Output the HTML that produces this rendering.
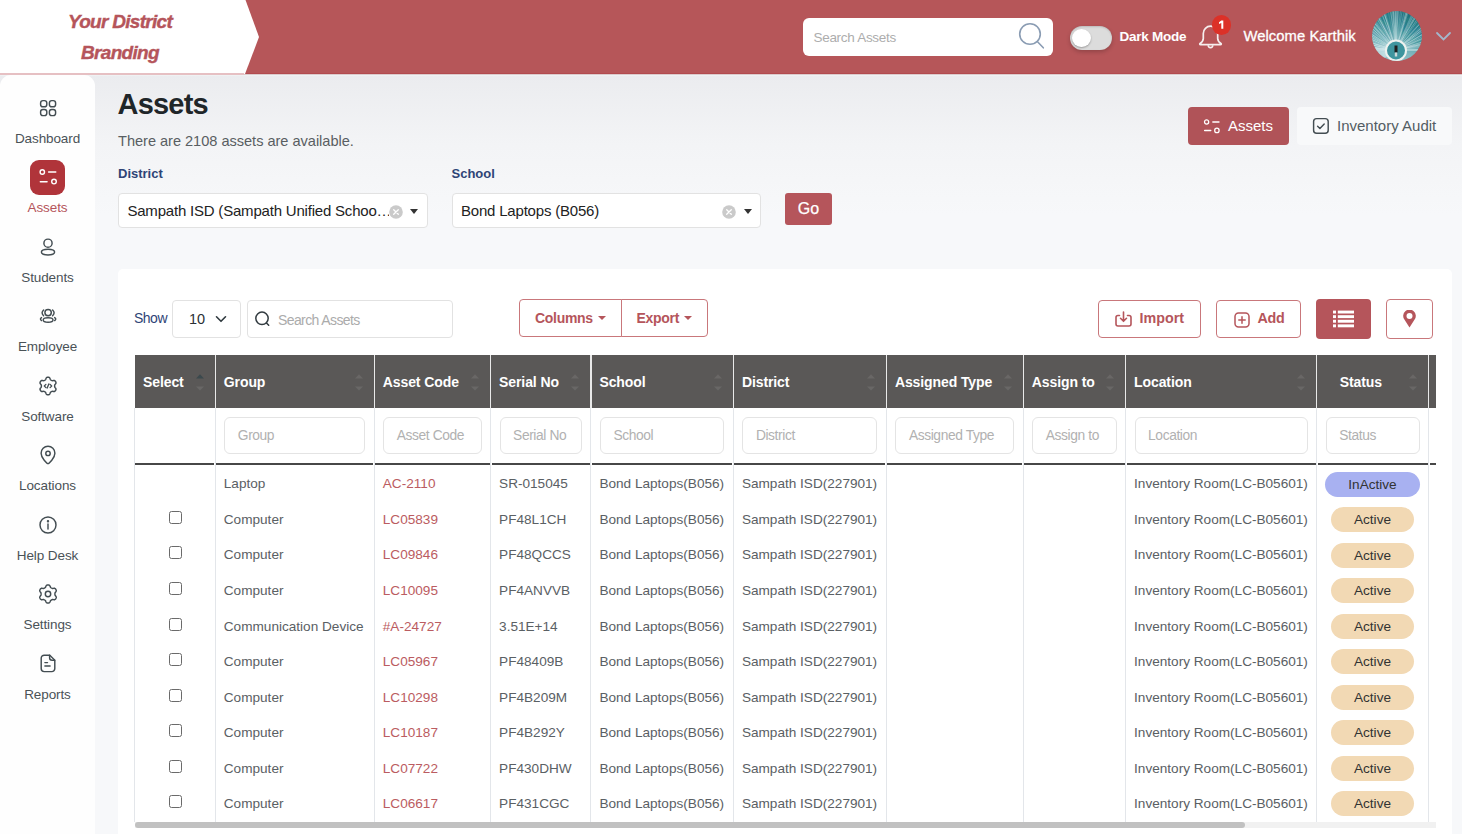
<!DOCTYPE html>
<html><head><meta charset="utf-8">
<style>
*{box-sizing:border-box;margin:0;padding:0}
html,body{width:1462px;height:834px;overflow:hidden}
body{font-family:"Liberation Sans",sans-serif;position:relative;background:linear-gradient(180deg,#ebecef 0px,#ebecef 76px,#f3f4f6 145px,#f7f8fa 215px,#f7f8fa 834px);color:#555}
.abs{position:absolute}
.hdr{left:0;top:0;width:1462px;height:74px;background:#b65659}
.logo{left:0;top:0;width:260px;height:74px;background:#fff;clip-path:polygon(0 0,245.5px 0,259px 37px,245px 74px,0 74px)}
.logoline{left:0;top:73px;width:244px;height:1.8px;background:#e6c0c3}
.logotxt{color:#b5555b;font-weight:bold;font-style:italic;font-size:19px;text-align:center;width:240px;left:0;line-height:31px;letter-spacing:-0.7px;-webkit-text-stroke:0.4px #b5555b}
.side{left:0;top:75px;width:95px;height:800px;background:#fefefe;border-radius:11px 11px 0 0}
.nav{position:absolute;left:0;width:95px;text-align:center;font-size:13.5px;color:#4a5257}
.nav svg{position:absolute;left:37.5px;top:0}
.nav span{position:absolute;left:0;width:95px;top:33px;letter-spacing:-0.1px}
.card{left:118px;top:268.5px;width:1334px;height:600px;background:#fff;border-radius:5px}
.txt{position:absolute;white-space:nowrap}
.th{position:absolute;top:355px;height:53px;background:#5a5857}
.thd{position:absolute;top:355px;height:53px;width:1.3px;background:#e9e9e9}
.vd{position:absolute;top:408px;height:414px;width:1px;background:#e3e6ea}
.finput{position:absolute;top:417px;height:37px;border:1px solid #e4e4e4;border-radius:6px;background:#fff;font-size:13.8px;color:#b1b1b1;padding-left:12.5px;line-height:35px;letter-spacing:-0.4px;white-space:nowrap;overflow:hidden}
.cell{position:absolute;font-size:13.6px;color:#5a6064;white-space:nowrap}
.code{color:#bb5c61}
.cb{position:absolute;left:168.5px;width:13.5px;height:13px;border:1.3px solid #6a6a6a;border-radius:2.5px;background:#fff}
.badge{position:absolute;height:25px;border-radius:13px;font-size:13.6px;color:#333;text-align:center;line-height:25px}
.obtn{position:absolute;border:1.3px solid #c9777b;border-radius:4px;background:#fff;color:#b5555b;font-weight:bold;font-size:14px}
</style></head><body>

<div class="abs hdr"></div><div class="abs" style="left:0;top:73px;width:1462px;height:1px;background:#b24b4f"></div><div class="abs" style="left:0;top:74px;width:1462px;height:1px;background:#dccbcd"></div><div class="abs" style="left:0;top:75px;width:1462px;height:1px;background:#eff2f3"></div>
<div class="abs logo"></div><div class="abs logoline"></div>
<div class="abs logotxt" style="top:6px">Your District</div><div class="abs logotxt" style="top:37px">Branding</div>
<div class="abs" style="left:803px;top:17.5px;width:250px;height:38px;background:#fff;border-radius:6px"></div>
<div class="txt" style="left:813.5px;top:30px;font-size:13.5px;color:#adadad;letter-spacing:-0.3px">Search Assets</div>
<svg class="abs" style="left:1016px;top:21px" width="32" height="30" viewBox="0 0 32 30"><circle cx="14" cy="13" r="10.3" stroke="#8a9cb3" stroke-width="1.6" fill="none"/><path d="M21.3 20.5l6 6.3" stroke="#8a9cb3" stroke-width="1.6" stroke-linecap="round"/></svg>
<div class="abs" style="left:1069.5px;top:25.5px;width:42px;height:24px;border-radius:12px;background:#dcdcdc;box-shadow:inset 0 1px 2px rgba(0,0,0,.15), 0 2px 4px rgba(0,0,0,.2)"></div>
<div class="abs" style="left:1072px;top:29px;width:18.5px;height:18px;border-radius:50%;background:#fff;box-shadow:0 1px 2px rgba(0,0,0,.3)"></div>
<div class="txt" style="left:1119.5px;top:28.5px;font-size:13.5px;font-weight:bold;color:#fff;letter-spacing:-0.25px">Dark Mode</div>
<svg class="abs" style="left:1197px;top:22.8px" width="28" height="30" viewBox="0 0 28 30"><path d="M6.3 10.4a7.2 7.2 0 0 1 14.4 0V15.5c0 2.5 1.5 3.8 3.2 5 .6.5.4 1.2-.4 1.2H3.5c-.8 0-1-.7-.4-1.2 1.7-1.2 3.2-2.5 3.2-5z" stroke="#f6eeee" stroke-width="1.7" fill="none" stroke-linejoin="round"/><path d="M11.2 22.3a2.3 2.3 0 0 0 4.6 0" stroke="#f6eeee" stroke-width="1.6" fill="none"/></svg>
<div class="abs" style="left:1211.5px;top:15.3px;width:19.5px;height:19.5px;border-radius:50%;background:#dc3128"><svg width="19.5" height="19.5" viewBox="0 0 19.5 19.5" style="position:absolute;left:0;top:0"><path d="M9.3 5.6h2V13.7h-2V8.1l-2.3.8V7.3z" fill="#fff"/></svg></div>
<div class="txt" style="left:1243.5px;top:27.5px;font-size:14.8px;color:#fff;letter-spacing:0.05px;-webkit-text-stroke:0.3px #fff">Welcome Karthik</div>
<div class="abs" style="left:1372.3px;top:11px;width:50px;height:50px;border-radius:50%;overflow:hidden;background:linear-gradient(200deg,#24707c 0%,#3f8f99 35%,#7fb8bf 70%,#9fcbd0 100%)"><svg width="50" height="50" viewBox="0 0 50 50" style="position:absolute;left:0;top:0"><path d="M15.0 39.1L-36.0 39.9" stroke="#e6f4f5" stroke-width="0.55" opacity="0.52"/><path d="M15.0 38.5L-35.9 35.9" stroke="#e6f4f5" stroke-width="0.39" opacity="0.56"/><path d="M15.0 38.4L-35.9 35.3" stroke="#e6f4f5" stroke-width="0.49" opacity="0.67"/><path d="M15.1 37.9L-35.6 31.8" stroke="#e6f4f5" stroke-width="0.61" opacity="0.75"/><path d="M15.2 37.2L-34.8 26.9" stroke="#e6f4f5" stroke-width="0.70" opacity="0.49"/><path d="M15.2 37.2L-34.7 26.7" stroke="#e6f4f5" stroke-width="0.83" opacity="0.57"/><path d="M15.3 36.6L-33.8 22.7" stroke="#e6f4f5" stroke-width="0.72" opacity="0.62"/><path d="M15.4 36.4L-33.5 21.7" stroke="#e6f4f5" stroke-width="0.68" opacity="0.63"/><path d="M15.6 35.9L-32.3 18.3" stroke="#e6f4f5" stroke-width="0.83" opacity="0.27"/><path d="M15.7 35.4L-31.1 15.2" stroke="#e6f4f5" stroke-width="0.83" opacity="0.61"/><path d="M16.0 34.9L-29.5 11.9" stroke="#e6f4f5" stroke-width="0.57" opacity="0.71"/><path d="M16.2 34.5L-28.1 9.2" stroke="#e6f4f5" stroke-width="0.86" opacity="0.47"/><path d="M16.4 34.2L-26.5 6.7" stroke="#e6f4f5" stroke-width="0.42" opacity="0.30"/><path d="M16.4 34.1L-26.4 6.4" stroke="#e6f4f5" stroke-width="0.59" opacity="0.73"/><path d="M16.8 33.6L-23.9 2.9" stroke="#e6f4f5" stroke-width="0.63" opacity="0.40"/><path d="M17.0 33.4L-22.8 1.5" stroke="#e6f4f5" stroke-width="0.67" opacity="0.43"/><path d="M17.3 33.0L-20.6 -1.2" stroke="#e6f4f5" stroke-width="0.73" opacity="0.70"/><path d="M17.7 32.5L-17.8 -4.0" stroke="#e6f4f5" stroke-width="0.90" opacity="0.68"/><path d="M17.9 32.4L-16.5 -5.3" stroke="#e6f4f5" stroke-width="0.82" opacity="0.33"/><path d="M18.4 32.0L-13.6 -7.7" stroke="#e6f4f5" stroke-width="0.66" opacity="0.70"/><path d="M18.6 31.8L-12.2 -8.9" stroke="#e6f4f5" stroke-width="0.81" opacity="0.36"/><path d="M18.8 31.6L-10.4 -10.2" stroke="#e6f4f5" stroke-width="0.38" opacity="0.39"/><path d="M19.3 31.3L-7.3 -12.2" stroke="#e6f4f5" stroke-width="0.40" opacity="0.74"/><path d="M19.6 31.1L-5.1 -13.5" stroke="#e6f4f5" stroke-width="0.43" opacity="0.46"/><path d="M19.8 31.1L-4.3 -13.9" stroke="#e6f4f5" stroke-width="0.83" opacity="0.63"/><path d="M20.0 30.9L-2.6 -14.8" stroke="#e6f4f5" stroke-width="0.37" opacity="0.56"/><path d="M20.7 30.6L2.1 -16.9" stroke="#e6f4f5" stroke-width="0.83" opacity="0.42"/><path d="M21.2 30.4L5.5 -18.1" stroke="#e6f4f5" stroke-width="0.90" opacity="0.50"/><path d="M21.3 30.4L5.8 -18.2" stroke="#e6f4f5" stroke-width="0.68" opacity="0.29"/><path d="M21.5 30.3L7.5 -18.7" stroke="#e6f4f5" stroke-width="0.57" opacity="0.35"/><path d="M22.2 30.2L12.2 -19.8" stroke="#e6f4f5" stroke-width="0.37" opacity="0.33"/><path d="M22.8 30.1L15.8 -20.4" stroke="#e6f4f5" stroke-width="0.88" opacity="0.41"/><path d="M23.2 30.0L18.6 -20.8" stroke="#e6f4f5" stroke-width="0.60" opacity="0.44"/><path d="M23.4 30.0L20.0 -20.9" stroke="#e6f4f5" stroke-width="0.68" opacity="0.57"/><path d="M23.8 30.0L22.8 -21.0" stroke="#e6f4f5" stroke-width="0.87" opacity="0.56"/><path d="M24.2 30.0L25.4 -21.0" stroke="#e6f4f5" stroke-width="0.75" opacity="0.47"/><path d="M24.5 30.0L27.2 -20.9" stroke="#e6f4f5" stroke-width="0.89" opacity="0.40"/><path d="M25.0 30.1L30.9 -20.6" stroke="#e6f4f5" stroke-width="0.36" opacity="0.52"/><path d="M25.4 30.1L33.2 -20.3" stroke="#e6f4f5" stroke-width="0.36" opacity="0.54"/><path d="M25.9 30.2L36.6 -19.7" stroke="#e6f4f5" stroke-width="0.38" opacity="0.57"/><path d="M26.3 30.3L39.3 -19.0" stroke="#e6f4f5" stroke-width="0.72" opacity="0.48"/><path d="M26.5 30.4L41.0 -18.5" stroke="#e6f4f5" stroke-width="0.76" opacity="0.60"/><path d="M26.8 30.4L42.5 -18.1" stroke="#e6f4f5" stroke-width="0.72" opacity="0.28"/><path d="M27.6 30.8L48.2 -15.9" stroke="#e6f4f5" stroke-width="0.60" opacity="0.38"/><path d="M27.8 30.8L49.5 -15.3" stroke="#e6f4f5" stroke-width="0.55" opacity="0.41"/><path d="M28.1 31.0L51.0 -14.6" stroke="#e6f4f5" stroke-width="0.68" opacity="0.43"/><path d="M28.4 31.2L53.4 -13.3" stroke="#e6f4f5" stroke-width="0.77" opacity="0.44"/><path d="M28.6 31.3L54.9 -12.4" stroke="#e6f4f5" stroke-width="0.75" opacity="0.53"/><path d="M29.1 31.6L58.0 -10.4" stroke="#e6f4f5" stroke-width="0.79" opacity="0.36"/><path d="M29.4 31.8L60.0 -9.0" stroke="#e6f4f5" stroke-width="0.59" opacity="0.34"/><path d="M29.9 32.2L63.5 -6.2" stroke="#e6f4f5" stroke-width="0.53" opacity="0.30"/><path d="M30.1 32.4L64.5 -5.3" stroke="#e6f4f5" stroke-width="0.59" opacity="0.67"/><path d="M30.6 32.8L67.8 -2.0" stroke="#e6f4f5" stroke-width="0.54" opacity="0.33"/><path d="M30.8 33.1L69.1 -0.5" stroke="#e6f4f5" stroke-width="0.60" opacity="0.69"/><path d="M30.9 33.2L69.9 0.4" stroke="#e6f4f5" stroke-width="0.64" opacity="0.31"/><path d="M31.1 33.5L71.5 2.4" stroke="#e6f4f5" stroke-width="0.81" opacity="0.65"/><path d="M31.4 33.8L73.1 4.6" stroke="#e6f4f5" stroke-width="0.79" opacity="0.39"/><path d="M31.7 34.4L75.5 8.3" stroke="#e6f4f5" stroke-width="0.54" opacity="0.65"/><path d="M31.8 34.5L76.0 9.0" stroke="#e6f4f5" stroke-width="0.79" opacity="0.40"/><path d="M32.0 34.9L77.5 11.9" stroke="#e6f4f5" stroke-width="0.58" opacity="0.42"/><path d="M32.2 35.4L78.9 14.8" stroke="#e6f4f5" stroke-width="0.86" opacity="0.45"/><path d="M32.3 35.6L79.6 16.5" stroke="#e6f4f5" stroke-width="0.87" opacity="0.25"/><path d="M32.6 36.4L81.4 21.5" stroke="#e6f4f5" stroke-width="0.59" opacity="0.74"/><path d="M32.7 36.8L82.2 24.4" stroke="#e6f4f5" stroke-width="0.47" opacity="0.71"/><path d="M32.8 37.1L82.6 26.3" stroke="#e6f4f5" stroke-width="0.71" opacity="0.67"/><path d="M32.9 37.4L83.0 28.2" stroke="#e6f4f5" stroke-width="0.54" opacity="0.39"/><path d="M32.9 37.6L83.3 29.9" stroke="#e6f4f5" stroke-width="0.67" opacity="0.28"/><path d="M33.0 38.1L83.7 32.8" stroke="#e6f4f5" stroke-width="0.37" opacity="0.66"/><path d="M33.0 38.8L84.0 37.7" stroke="#e6f4f5" stroke-width="0.86" opacity="0.60"/><path d="M33.0 39.2L84.0 40.4" stroke="#e6f4f5" stroke-width="0.67" opacity="0.70"/><path d="M24 39L-35.6 32.4" stroke="#e6f4f5" stroke-width="0.6" opacity="0.5"/><path d="M24 39L-35.8 34.1" stroke="#e6f4f5" stroke-width="0.6" opacity="0.5"/><path d="M24 39L-35.9 35.9" stroke="#e6f4f5" stroke-width="0.6" opacity="0.5"/><path d="M24 39L-36.0 37.7" stroke="#e6f4f5" stroke-width="0.6" opacity="0.5"/><path d="M24 39L-36.0 39.4" stroke="#e6f4f5" stroke-width="0.6" opacity="0.5"/><path d="M24 39L-36.0 41.2" stroke="#e6f4f5" stroke-width="0.6" opacity="0.5"/><path d="M24 39L-35.9 43.0" stroke="#e6f4f5" stroke-width="0.6" opacity="0.5"/><path d="M24 39L-35.7 44.7" stroke="#e6f4f5" stroke-width="0.6" opacity="0.5"/><path d="M24 39L-35.5 46.5" stroke="#e6f4f5" stroke-width="0.6" opacity="0.5"/><path d="M24 39L-35.3 48.2" stroke="#e6f4f5" stroke-width="0.6" opacity="0.5"/><path d="M24 39L-35.0 50.0" stroke="#e6f4f5" stroke-width="0.6" opacity="0.5"/><path d="M24 39L-34.6 51.7" stroke="#e6f4f5" stroke-width="0.6" opacity="0.5"/><path d="M24 39L-34.2 53.4" stroke="#e6f4f5" stroke-width="0.6" opacity="0.5"/><path d="M24 39L-33.8 55.1" stroke="#e6f4f5" stroke-width="0.6" opacity="0.5"/><path d="M24 39L-33.3 56.8" stroke="#e6f4f5" stroke-width="0.6" opacity="0.5"/><path d="M24 39L-32.7 58.5" stroke="#e6f4f5" stroke-width="0.6" opacity="0.5"/><path d="M24 39L-32.1 60.2" stroke="#e6f4f5" stroke-width="0.6" opacity="0.5"/><path d="M24 39L-31.5 61.8" stroke="#e6f4f5" stroke-width="0.6" opacity="0.5"/><path d="M24 39L-30.8 63.4" stroke="#e6f4f5" stroke-width="0.6" opacity="0.5"/><path d="M24 39L-30.1 65.0" stroke="#e6f4f5" stroke-width="0.6" opacity="0.5"/><path d="M24 39L-29.3 66.6" stroke="#e6f4f5" stroke-width="0.6" opacity="0.5"/><path d="M24 39L-28.4 68.2" stroke="#e6f4f5" stroke-width="0.6" opacity="0.5"/><path d="M24 39L-27.5 69.7" stroke="#e6f4f5" stroke-width="0.6" opacity="0.5"/><path d="M24 39L-26.6 71.2" stroke="#e6f4f5" stroke-width="0.6" opacity="0.5"/><path d="M24 39L-25.7 72.7" stroke="#e6f4f5" stroke-width="0.6" opacity="0.5"/><circle cx="24" cy="39.5" r="10" stroke="#eef2ef" stroke-width="2" fill="#3e959e"/><path d="M22.5 34.5h3v7h-3z" fill="#1e1e1e"/><path d="M22.8 41.5h2.4v4h-2.4z" fill="#cfd8d8"/></svg></div>
<svg class="abs" style="left:1435px;top:30px" width="17" height="12" viewBox="0 0 17 12"><path d="M2 3l6.5 6.5L15 3" stroke="#a3b7cc" stroke-width="1.8" fill="none" stroke-linecap="round"/></svg>
<div class="abs side"></div>
<div class="nav" style="top:98px"><svg width="20" height="20" viewBox="0 0 20 20"><g stroke="#434d52" stroke-width="1.45" fill="none" stroke-linecap="round" stroke-linejoin="round"><rect x="2.6" y="2.6" width="6.2" height="6.2" rx="2.4"/><rect x="11.4" y="2.6" width="6.2" height="6.2" rx="2.4"/><rect x="2.6" y="11.4" width="6.2" height="6.2" rx="2.4"/><rect x="11.4" y="11.4" width="6.2" height="6.2" rx="2.4"/></g></svg><span>Dashboard</span></div>
<div class="nav" style="top:237px"><svg width="20" height="20" viewBox="0 0 20 20"><g stroke="#434d52" stroke-width="1.45" fill="none" stroke-linecap="round" stroke-linejoin="round"><circle cx="10" cy="6.2" r="4.1"/><ellipse cx="10" cy="15.1" rx="6.6" ry="2.8"/></g></svg><span>Students</span></div>
<div class="nav" style="top:306px"><svg width="20" height="20" viewBox="0 0 20 20"><g stroke="#434d52" stroke-width="1.45" fill="none" stroke-linecap="round" stroke-linejoin="round"><circle cx="10.1" cy="6.6" r="3.2"/><ellipse cx="10.1" cy="14" rx="4.9" ry="2.2"/><path d="M5.6 4Q2.6 6.85 5.6 9.7M14.6 4Q17.6 6.85 14.6 9.7M3.5 11.6Q1.4 13.1 3.5 14.6M16.7 11.6Q18.8 13.1 16.7 14.6"/></g></svg><span>Employee</span></div>
<div class="nav" style="top:376px"><svg width="20" height="20" viewBox="0 0 20 20" style="left:37.5px;top:0"><g stroke="#434d52" stroke-width="1.45" fill="none" stroke-linecap="round" stroke-linejoin="round"><path d="M16.62 10.00 L16.63 10.43 L16.68 10.88 L16.91 11.37 L17.44 11.99 L17.91 12.69 L18.00 13.31 L17.85 13.87 L17.60 14.39 L17.28 14.86 L16.87 15.27 L16.28 15.51 L15.44 15.44 L14.64 15.29 L14.10 15.35 L13.69 15.53 L13.31 15.74 L12.94 15.96 L12.58 16.23 L12.26 16.67 L11.99 17.44 L11.63 18.20 L11.13 18.59 L10.57 18.74 L10.00 18.78 L9.43 18.74 L8.87 18.59 L8.37 18.20 L8.01 17.44 L7.74 16.67 L7.42 16.23 L7.06 15.96 L6.69 15.74 L6.31 15.53 L5.90 15.35 L5.36 15.29 L4.56 15.44 L3.72 15.51 L3.13 15.27 L2.72 14.86 L2.40 14.39 L2.15 13.87 L2.00 13.31 L2.09 12.69 L2.56 11.99 L3.09 11.37 L3.32 10.88 L3.37 10.43 L3.38 10.00 L3.37 9.57 L3.32 9.12 L3.09 8.63 L2.56 8.01 L2.09 7.31 L2.00 6.69 L2.15 6.13 L2.40 5.61 L2.72 5.14 L3.13 4.73 L3.72 4.49 L4.56 4.56 L5.36 4.71 L5.90 4.65 L6.31 4.47 L6.69 4.26 L7.06 4.04 L7.42 3.77 L7.74 3.33 L8.01 2.56 L8.37 1.80 L8.87 1.41 L9.43 1.26 L10.00 1.22 L10.57 1.26 L11.13 1.41 L11.63 1.80 L11.99 2.56 L12.26 3.33 L12.58 3.77 L12.94 4.04 L13.31 4.26 L13.69 4.47 L14.10 4.65 L14.64 4.71 L15.44 4.56 L16.28 4.49 L16.87 4.73 L17.28 5.14 L17.60 5.61 L17.85 6.13 L18.00 6.69 L17.91 7.31 L17.44 8.01 L16.91 8.63 L16.68 9.12 L16.63 9.57Z"/><path d="M7.9 8.4l-1.6 1.6 1.6 1.6M12.1 8.4l1.6 1.6-1.6 1.6M10.8 7.9l-1.6 4.2" stroke-width="1.3"/></g></svg><span>Software</span></div>
<div class="nav" style="top:445px"><svg width="20" height="20" viewBox="0 0 20 20"><g stroke="#434d52" stroke-width="1.45" fill="none" stroke-linecap="round" stroke-linejoin="round"><path d="M10 18.6c-.9 0-6.9-5.6-6.9-10.4a6.9 6.9 0 0 1 13.8 0c0 4.8-6 10.4-6.9 10.4z"/><circle cx="10" cy="8.4" r="2.2"/></g></svg><span>Locations</span></div>
<div class="nav" style="top:515px"><svg width="20" height="20" viewBox="0 0 20 20"><g stroke="#434d52" stroke-width="1.45" fill="none" stroke-linecap="round" stroke-linejoin="round"><circle cx="10" cy="10" r="8"/><path d="M10 9v5"/><circle cx="10" cy="6.3" r=".5" fill="#3f4a50"/></g></svg><span>Help Desk</span></div>
<div class="nav" style="top:584px"><svg width="20" height="20" viewBox="0 0 20 20"><g stroke="#434d52" stroke-width="1.45" fill="none" stroke-linecap="round" stroke-linejoin="round"><path d="M16.92 10.00 L16.93 10.45 L16.98 10.92 L17.20 11.43 L17.73 12.07 L18.20 12.78 L18.28 13.43 L18.12 14.00 L17.86 14.54 L17.53 15.03 L17.11 15.45 L16.51 15.71 L15.66 15.66 L14.84 15.52 L14.29 15.59 L13.86 15.77 L13.46 16.00 L13.07 16.23 L12.69 16.50 L12.36 16.95 L12.07 17.73 L11.69 18.49 L11.17 18.88 L10.59 19.04 L10.00 19.08 L9.41 19.04 L8.83 18.88 L8.31 18.49 L7.93 17.73 L7.64 16.95 L7.31 16.50 L6.93 16.23 L6.54 16.00 L6.14 15.77 L5.71 15.59 L5.16 15.52 L4.34 15.66 L3.49 15.71 L2.89 15.45 L2.47 15.03 L2.14 14.54 L1.88 14.00 L1.72 13.43 L1.80 12.78 L2.27 12.07 L2.80 11.43 L3.02 10.92 L3.07 10.45 L3.08 10.00 L3.07 9.55 L3.02 9.08 L2.80 8.57 L2.27 7.93 L1.80 7.22 L1.72 6.57 L1.88 6.00 L2.14 5.46 L2.47 4.97 L2.89 4.55 L3.49 4.29 L4.34 4.34 L5.16 4.48 L5.71 4.41 L6.14 4.23 L6.54 4.00 L6.93 3.77 L7.31 3.50 L7.64 3.05 L7.93 2.27 L8.31 1.51 L8.83 1.12 L9.41 0.96 L10.00 0.92 L10.59 0.96 L11.17 1.12 L11.69 1.51 L12.07 2.27 L12.36 3.05 L12.69 3.50 L13.07 3.77 L13.46 4.00 L13.86 4.23 L14.29 4.41 L14.84 4.48 L15.66 4.34 L16.51 4.29 L17.11 4.55 L17.53 4.97 L17.86 5.46 L18.12 6.00 L18.28 6.57 L18.20 7.22 L17.73 7.93 L17.20 8.57 L16.98 9.08 L16.93 9.55Z"/><circle cx="10" cy="10" r="2.7"/></g></svg><span>Settings</span></div>
<div class="nav" style="top:654px"><svg width="20" height="20" viewBox="0 0 20 20"><g stroke="#434d52" stroke-width="1.45" fill="none" stroke-linecap="round" stroke-linejoin="round"><path d="M3.2 4.2a3 3 0 0 1 3-3h5.6l5 5v8.4a3 3 0 0 1-3 3h-7.6a3 3 0 0 1-3-3z"/><path d="M11.6 1.3v2.4a2.5 2.5 0 0 0 2.5 2.5h2.6M6.9 8.6h2.6M6.9 12h5.2"/></g></svg><span>Reports</span></div>
<div class="abs" style="left:30.2px;top:159.5px;width:35px;height:35px;border-radius:9px;background:#b0343a"></div>
<svg class="abs" style="left:37.7px;top:167px" width="20" height="20" viewBox="0 0 20 20"><g stroke="#fff" stroke-width="1.4" fill="none" stroke-linecap="round"><circle cx="4.3" cy="5" r="2.2"/><path d="M10.6 5h7.2M2.3 14.8h6.8"/><circle cx="16" cy="14.6" r="2.3"/></g></svg>
<div class="nav" style="top:199.5px;color:#b5555b"><span style="top:0">Assets</span></div>
<div class="txt" style="left:117.5px;top:88px;font-size:29px;font-weight:bold;color:#1f2629;letter-spacing:-0.8px">Assets</div>
<div class="txt" style="left:118px;top:132.5px;font-size:14.6px;color:#595e62;letter-spacing:-0.03px">There are 2108 assets are available.</div>
<div class="abs" style="left:1187.7px;top:107px;width:101.3px;height:38px;border-radius:4px;background:#b05358"></div>
<svg class="abs" style="left:1202px;top:117px" width="20" height="18" viewBox="0 0 20 18"><g stroke="#fff" stroke-width="1.3" fill="none" stroke-linecap="round"><circle cx="4.6" cy="5" r="2.1"/><path d="M10.8 5h6.2M2.6 13.5h6.2"/><circle cx="14.9" cy="13.4" r="2.2"/></g></svg>
<div class="txt" style="left:1228px;top:117px;font-size:15px;color:#fff">Assets</div>
<div class="abs" style="left:1296.7px;top:107px;width:155.3px;height:38px;border-radius:4px;background:#f8f9fa"></div>
<svg class="abs" style="left:1311px;top:115.8px" width="20" height="20" viewBox="0 0 20 20"><rect x="2.6" y="2.6" width="14.6" height="14.6" rx="3" stroke="#434d52" stroke-width="1.45" fill="none"/><path d="M6.6 10.2l2.3 2.2 4.3-4.4" stroke="#434d52" stroke-width="1.45" fill="none" stroke-linecap="round" stroke-linejoin="round"/></svg>
<div class="txt" style="left:1337px;top:117px;font-size:15px;color:#535d63">Inventory Audit</div>
<div class="txt" style="left:118px;top:166px;font-size:13px;font-weight:bold;color:#2e4476">District</div>
<div class="txt" style="left:451.5px;top:166px;font-size:13px;font-weight:bold;color:#2e4476">School</div>
<div class="abs" style="left:118.4px;top:193.3px;width:309.5px;height:35px;border:1px solid #e2e2e2;border-radius:4px;background:#fff"></div>
<div class="abs" style="left:451.8px;top:193.3px;width:309.5px;height:35px;border:1px solid #e2e2e2;border-radius:4px;background:#fff"></div>
<div class="txt" style="left:127.4px;top:202px;font-size:15px;color:#222;letter-spacing:-0.2px;width:262px;overflow:hidden">Sampath ISD (Sampath Unified Schoo…</div>
<div class="txt" style="left:461px;top:202px;font-size:15px;color:#222;letter-spacing:-0.2px;width:250px;overflow:hidden">Bond Laptops (B056)</div>
<svg class="abs" style="left:388.5px;top:204.5px" width="14" height="14" viewBox="0 0 14 14"><circle cx="7" cy="7" r="6.8" fill="#cacaca"/><path d="M4.7 4.7l4.6 4.6M9.3 4.7l-4.6 4.6" stroke="#fff" stroke-width="1.3" stroke-linecap="round"/></svg>
<svg class="abs" style="left:721.5px;top:204.5px" width="14" height="14" viewBox="0 0 14 14"><circle cx="7" cy="7" r="6.8" fill="#cacaca"/><path d="M4.7 4.7l4.6 4.6M9.3 4.7l-4.6 4.6" stroke="#fff" stroke-width="1.3" stroke-linecap="round"/></svg>
<svg class="abs" style="left:410.4px;top:209px" width="8" height="5" viewBox="0 0 8 5"><path d="M0 0h8L4 5z" fill="#333"/></svg>
<svg class="abs" style="left:744px;top:209px" width="8" height="5" viewBox="0 0 8 5"><path d="M0 0h8L4 5z" fill="#333"/></svg>
<div class="abs" style="left:785px;top:193px;width:47px;height:32px;border-radius:3px;background:#b5555b;color:#fff;font-size:16px;text-align:center;line-height:32px;-webkit-text-stroke:0.25px #fff">Go</div>
<div class="abs card"></div>
<div class="txt" style="left:134px;top:310px;font-size:14px;color:#2e4476;letter-spacing:-0.5px">Show</div>
<div class="abs" style="left:172px;top:300px;width:69.3px;height:38px;border:1px solid #e2e2e2;border-radius:4px"></div>
<div class="txt" style="left:189px;top:310.5px;font-size:14.5px;color:#2a3035">10</div>
<svg class="abs" style="left:214px;top:314px" width="14" height="10" viewBox="0 0 14 10"><path d="M2.5 2.8l4.5 4.5 4.5-4.5" stroke="#2f393e" stroke-width="1.6" fill="none" stroke-linecap="round" stroke-linejoin="round"/></svg>
<div class="abs" style="left:247.3px;top:300px;width:206px;height:38px;border:1px solid #e2e2e2;border-radius:4px"></div>
<svg class="abs" style="left:253px;top:309px" width="20" height="20" viewBox="0 0 20 20"><circle cx="9" cy="9.3" r="6.2" stroke="#323b40" stroke-width="1.5" fill="none"/><path d="M13.5 14l2.2 2.2" stroke="#323b40" stroke-width="1.5" stroke-linecap="round"/></svg>
<div class="txt" style="left:278px;top:311.5px;font-size:14px;color:#ababab;letter-spacing:-0.6px">Search Assets</div>
<div class="obtn" style="left:518.6px;top:299.3px;width:103px;height:37.5px;border-radius:4px 0 0 4px"></div>
<div class="obtn" style="left:620.6px;top:299.3px;width:87px;height:37.5px;border-radius:0 4px 4px 0"></div>
<div class="txt" style="left:535px;top:309.5px;font-size:14px;font-weight:bold;color:#b5555b;letter-spacing:-0.3px">Columns</div>
<svg class="abs" style="left:597.5px;top:315.5px" width="8" height="4" viewBox="0 0 8 4"><path d="M0 0h8L4 4z" fill="#b5555b"/></svg>
<div class="txt" style="left:636.5px;top:309.5px;font-size:14px;font-weight:bold;color:#b5555b;letter-spacing:-0.3px">Export</div>
<svg class="abs" style="left:683.5px;top:315.5px" width="8" height="4" viewBox="0 0 8 4"><path d="M0 0h8L4 4z" fill="#b5555b"/></svg>
<div class="obtn" style="left:1098px;top:299.8px;width:103.3px;height:38.2px"></div>
<svg class="abs" style="left:1114px;top:310px" width="19" height="18" viewBox="0 0 19 18"><g stroke="#b5555b" stroke-width="1.6" fill="none" stroke-linecap="round" stroke-linejoin="round"><path d="M5.5 5.5H4a2 2 0 0 0-2 2v6.5a2 2 0 0 0 2 2h11a2 2 0 0 0 2-2V7.5a2 2 0 0 0-2-2h-1.5"/><path d="M9.5 2v9M6.5 8.3l3 3 3-3"/></g></svg>
<div class="txt" style="left:1139.5px;top:310px;font-size:14.3px;font-weight:bold;color:#b5555b">Import</div>
<div class="obtn" style="left:1216.3px;top:299.8px;width:84.3px;height:38.2px"></div>
<svg class="abs" style="left:1232.5px;top:310.5px" width="18" height="18" viewBox="0 0 18 18"><g stroke="#b5555b" stroke-width="1.5" fill="none" stroke-linecap="round"><rect x="2" y="2" width="14" height="14" rx="3.5"/><path d="M9 5.8v6.4M5.8 9h6.4"/></g></svg>
<div class="txt" style="left:1257.5px;top:310px;font-size:14.3px;font-weight:bold;color:#b5555b;letter-spacing:-0.3px">Add</div>
<div class="abs" style="left:1316px;top:299.4px;width:54.8px;height:39.2px;border-radius:4px;background:#b5555b"></div>
<svg class="abs" style="left:1332px;top:309.5px" width="23" height="18" viewBox="0 0 23 18"><g fill="#fff"><rect x="1" y="0.6" width="3" height="2.9"/><rect x="5.8" y="0.6" width="16.2" height="2.9"/><rect x="1" y="5.2" width="3" height="2.9"/><rect x="5.8" y="5.2" width="16.2" height="2.9"/><rect x="1" y="9.8" width="3" height="2.9"/><rect x="5.8" y="9.8" width="16.2" height="2.9"/><rect x="1" y="14.4" width="3" height="2.9"/><rect x="5.8" y="14.4" width="16.2" height="2.9"/></g></svg>
<div class="obtn" style="left:1386.2px;top:299.4px;width:46.6px;height:39.2px"></div>
<svg class="abs" style="left:1402px;top:310px" width="15" height="18" viewBox="0 0 15 18"><path d="M7.5 17.4L2.4 9.6A6.3 6.3 0 1 1 12.6 9.6z" fill="#b5555b"/><circle cx="7.5" cy="5.9" r="3" fill="#fff"/></svg>
<div class="th" style="left:134.5px;width:1301.5px"></div>
<div class="thd" style="left:214.70000000000002px"></div>
<div class="thd" style="left:373.7px"></div>
<div class="thd" style="left:490.0px"></div>
<div class="thd" style="left:590.3px"></div>
<div class="thd" style="left:732.8px"></div>
<div class="thd" style="left:885.8px"></div>
<div class="thd" style="left:1022.6999999999999px"></div>
<div class="thd" style="left:1125.0px"></div>
<div class="thd" style="left:1316.1000000000001px"></div>
<div class="thd" style="left:1428.0px"></div>
<div class="txt" style="left:143.0px;top:373.7px;font-size:14px;font-weight:bold;color:#fff;letter-spacing:-0.1px">Select</div>
<svg class="abs" style="left:195.8px;top:372.5px" width="8" height="18" viewBox="0 0 8 18"><path d="M0 5.4h8L4 1.2z" fill="#3b494d"/><path d="M0 13.5h8L4 17.6z" fill="#696766"/></svg>
<div class="txt" style="left:223.8px;top:373.7px;font-size:14px;font-weight:bold;color:#fff;letter-spacing:-0.1px">Group</div>
<svg class="abs" style="left:354.8px;top:372.5px" width="8" height="18" viewBox="0 0 8 18"><path d="M0 5.4h8L4 1.2z" fill="#696766"/><path d="M0 13.5h8L4 17.6z" fill="#696766"/></svg>
<div class="txt" style="left:382.8px;top:373.7px;font-size:14px;font-weight:bold;color:#fff;letter-spacing:-0.1px">Asset Code</div>
<svg class="abs" style="left:471.1px;top:372.5px" width="8" height="18" viewBox="0 0 8 18"><path d="M0 5.4h8L4 1.2z" fill="#696766"/><path d="M0 13.5h8L4 17.6z" fill="#696766"/></svg>
<div class="txt" style="left:499.1px;top:373.7px;font-size:14px;font-weight:bold;color:#fff;letter-spacing:-0.1px">Serial No</div>
<svg class="abs" style="left:571.4px;top:372.5px" width="8" height="18" viewBox="0 0 8 18"><path d="M0 5.4h8L4 1.2z" fill="#696766"/><path d="M0 13.5h8L4 17.6z" fill="#696766"/></svg>
<div class="txt" style="left:599.4px;top:373.7px;font-size:14px;font-weight:bold;color:#fff;letter-spacing:-0.1px">School</div>
<svg class="abs" style="left:713.9px;top:372.5px" width="8" height="18" viewBox="0 0 8 18"><path d="M0 5.4h8L4 1.2z" fill="#696766"/><path d="M0 13.5h8L4 17.6z" fill="#696766"/></svg>
<div class="txt" style="left:741.9px;top:373.7px;font-size:14px;font-weight:bold;color:#fff;letter-spacing:-0.1px">District</div>
<svg class="abs" style="left:866.9px;top:372.5px" width="8" height="18" viewBox="0 0 8 18"><path d="M0 5.4h8L4 1.2z" fill="#696766"/><path d="M0 13.5h8L4 17.6z" fill="#696766"/></svg>
<div class="txt" style="left:894.9px;top:373.7px;font-size:14px;font-weight:bold;color:#fff;letter-spacing:-0.1px">Assigned Type</div>
<svg class="abs" style="left:1003.8px;top:372.5px" width="8" height="18" viewBox="0 0 8 18"><path d="M0 5.4h8L4 1.2z" fill="#696766"/><path d="M0 13.5h8L4 17.6z" fill="#696766"/></svg>
<div class="txt" style="left:1031.8px;top:373.7px;font-size:14px;font-weight:bold;color:#fff;letter-spacing:-0.1px">Assign to</div>
<svg class="abs" style="left:1106.1px;top:372.5px" width="8" height="18" viewBox="0 0 8 18"><path d="M0 5.4h8L4 1.2z" fill="#696766"/><path d="M0 13.5h8L4 17.6z" fill="#696766"/></svg>
<div class="txt" style="left:1134.1px;top:373.7px;font-size:14px;font-weight:bold;color:#fff;letter-spacing:-0.1px">Location</div>
<svg class="abs" style="left:1297.2px;top:372.5px" width="8" height="18" viewBox="0 0 8 18"><path d="M0 5.4h8L4 1.2z" fill="#696766"/><path d="M0 13.5h8L4 17.6z" fill="#696766"/></svg>
<div class="txt" style="left:1339.7px;top:373.7px;font-size:14px;font-weight:bold;color:#fff;letter-spacing:-0.1px">Status</div>
<svg class="abs" style="left:1409.1px;top:372.5px" width="8" height="18" viewBox="0 0 8 18"><path d="M0 5.4h8L4 1.2z" fill="#696766"/><path d="M0 13.5h8L4 17.6z" fill="#696766"/></svg>
<div class="vd" style="left:134px;top:408px;height:414px"></div>
<div class="vd" style="left:214.8px"></div>
<div class="vd" style="left:373.8px"></div>
<div class="vd" style="left:490.1px"></div>
<div class="vd" style="left:590.4px"></div>
<div class="vd" style="left:732.9px"></div>
<div class="vd" style="left:885.9px"></div>
<div class="vd" style="left:1022.8px"></div>
<div class="vd" style="left:1125.1px"></div>
<div class="vd" style="left:1316.2px"></div>
<div class="vd" style="left:1428.1px"></div>
<div class="finput" style="left:224.3px;width:141.0px">Group</div>
<div class="finput" style="left:383.3px;width:98.30000000000001px">Asset Code</div>
<div class="finput" style="left:499.6px;width:82.29999999999995px">Serial No</div>
<div class="finput" style="left:599.9px;width:124.5px">School</div>
<div class="finput" style="left:742.4px;width:135.0px">District</div>
<div class="finput" style="left:895.4px;width:118.89999999999998px">Assigned Type</div>
<div class="finput" style="left:1032.3px;width:84.29999999999995px">Assign to</div>
<div class="finput" style="left:1134.6px;width:173.10000000000014px">Location</div>
<div class="finput" style="left:1325.7px;width:93.89999999999986px">Status</div>
<div class="abs" style="left:134.5px;top:462.5px;width:79.9px;height:2px;background:#474747"></div>
<div class="abs" style="left:216.20000000000002px;top:462.5px;width:157.20000000000002px;height:2px;background:#474747"></div>
<div class="abs" style="left:375.2px;top:462.5px;width:114.50000000000006px;height:2px;background:#474747"></div>
<div class="abs" style="left:491.5px;top:462.5px;width:98.5px;height:2px;background:#474747"></div>
<div class="abs" style="left:591.8px;top:462.5px;width:140.70000000000005px;height:2px;background:#474747"></div>
<div class="abs" style="left:734.3px;top:462.5px;width:151.20000000000005px;height:2px;background:#474747"></div>
<div class="abs" style="left:887.3px;top:462.5px;width:135.10000000000002px;height:2px;background:#474747"></div>
<div class="abs" style="left:1024.2px;top:462.5px;width:100.49999999999977px;height:2px;background:#474747"></div>
<div class="abs" style="left:1126.5px;top:462.5px;width:189.29999999999995px;height:2px;background:#474747"></div>
<div class="abs" style="left:1317.6000000000001px;top:462.5px;width:110.09999999999968px;height:2px;background:#474747"></div>
<div class="abs" style="left:1429.5px;top:462.5px;width:6.5px;height:2px;background:#474747"></div>
<div class="cell" style="left:223.8px;top:476.3px">Laptop</div>
<div class="cell code" style="left:382.8px;top:476.3px">AC-2110</div>
<div class="cell" style="left:499.1px;top:476.3px">SR-015045</div>
<div class="cell" style="left:599.4px;top:476.3px">Bond Laptops(B056)</div>
<div class="cell" style="left:741.9px;top:476.3px">Sampath ISD(227901)</div>
<div class="cell" style="left:1134.1px;top:476.3px">Inventory Room(LC-B05601)</div>
<div class="badge" style="left:1325px;top:471.5px;width:95px;background:#a8b1f1">InActive</div>
<div class="cb" style="top:510.85px"></div>
<div class="cell" style="left:223.8px;top:511.85px">Computer</div>
<div class="cell code" style="left:382.8px;top:511.85px">LC05839</div>
<div class="cell" style="left:499.1px;top:511.85px">PF48L1CH</div>
<div class="cell" style="left:599.4px;top:511.85px">Bond Laptops(B056)</div>
<div class="cell" style="left:741.9px;top:511.85px">Sampath ISD(227901)</div>
<div class="cell" style="left:1134.1px;top:511.85px">Inventory Room(LC-B05601)</div>
<div class="badge" style="left:1331px;top:507.05px;width:83px;background:#f2d9b4">Active</div>
<div class="cb" style="top:546.4px"></div>
<div class="cell" style="left:223.8px;top:547.4px">Computer</div>
<div class="cell code" style="left:382.8px;top:547.4px">LC09846</div>
<div class="cell" style="left:499.1px;top:547.4px">PF48QCCS</div>
<div class="cell" style="left:599.4px;top:547.4px">Bond Laptops(B056)</div>
<div class="cell" style="left:741.9px;top:547.4px">Sampath ISD(227901)</div>
<div class="cell" style="left:1134.1px;top:547.4px">Inventory Room(LC-B05601)</div>
<div class="badge" style="left:1331px;top:542.6px;width:83px;background:#f2d9b4">Active</div>
<div class="cb" style="top:581.9499999999999px"></div>
<div class="cell" style="left:223.8px;top:582.9499999999999px">Computer</div>
<div class="cell code" style="left:382.8px;top:582.9499999999999px">LC10095</div>
<div class="cell" style="left:499.1px;top:582.9499999999999px">PF4ANVVB</div>
<div class="cell" style="left:599.4px;top:582.9499999999999px">Bond Laptops(B056)</div>
<div class="cell" style="left:741.9px;top:582.9499999999999px">Sampath ISD(227901)</div>
<div class="cell" style="left:1134.1px;top:582.9499999999999px">Inventory Room(LC-B05601)</div>
<div class="badge" style="left:1331px;top:578.15px;width:83px;background:#f2d9b4">Active</div>
<div class="cb" style="top:617.5px"></div>
<div class="cell" style="left:223.8px;top:618.5px">Communication Device</div>
<div class="cell code" style="left:382.8px;top:618.5px">#A-24727</div>
<div class="cell" style="left:499.1px;top:618.5px">3.51E+14</div>
<div class="cell" style="left:599.4px;top:618.5px">Bond Laptops(B056)</div>
<div class="cell" style="left:741.9px;top:618.5px">Sampath ISD(227901)</div>
<div class="cell" style="left:1134.1px;top:618.5px">Inventory Room(LC-B05601)</div>
<div class="badge" style="left:1331px;top:613.7px;width:83px;background:#f2d9b4">Active</div>
<div class="cb" style="top:653.05px"></div>
<div class="cell" style="left:223.8px;top:654.05px">Computer</div>
<div class="cell code" style="left:382.8px;top:654.05px">LC05967</div>
<div class="cell" style="left:499.1px;top:654.05px">PF48409B</div>
<div class="cell" style="left:599.4px;top:654.05px">Bond Laptops(B056)</div>
<div class="cell" style="left:741.9px;top:654.05px">Sampath ISD(227901)</div>
<div class="cell" style="left:1134.1px;top:654.05px">Inventory Room(LC-B05601)</div>
<div class="badge" style="left:1331px;top:649.25px;width:83px;background:#f2d9b4">Active</div>
<div class="cb" style="top:688.5999999999999px"></div>
<div class="cell" style="left:223.8px;top:689.5999999999999px">Computer</div>
<div class="cell code" style="left:382.8px;top:689.5999999999999px">LC10298</div>
<div class="cell" style="left:499.1px;top:689.5999999999999px">PF4B209M</div>
<div class="cell" style="left:599.4px;top:689.5999999999999px">Bond Laptops(B056)</div>
<div class="cell" style="left:741.9px;top:689.5999999999999px">Sampath ISD(227901)</div>
<div class="cell" style="left:1134.1px;top:689.5999999999999px">Inventory Room(LC-B05601)</div>
<div class="badge" style="left:1331px;top:684.8px;width:83px;background:#f2d9b4">Active</div>
<div class="cb" style="top:724.1499999999999px"></div>
<div class="cell" style="left:223.8px;top:725.1499999999999px">Computer</div>
<div class="cell code" style="left:382.8px;top:725.1499999999999px">LC10187</div>
<div class="cell" style="left:499.1px;top:725.1499999999999px">PF4B292Y</div>
<div class="cell" style="left:599.4px;top:725.1499999999999px">Bond Laptops(B056)</div>
<div class="cell" style="left:741.9px;top:725.1499999999999px">Sampath ISD(227901)</div>
<div class="cell" style="left:1134.1px;top:725.1499999999999px">Inventory Room(LC-B05601)</div>
<div class="badge" style="left:1331px;top:720.3499999999999px;width:83px;background:#f2d9b4">Active</div>
<div class="cb" style="top:759.6999999999999px"></div>
<div class="cell" style="left:223.8px;top:760.6999999999999px">Computer</div>
<div class="cell code" style="left:382.8px;top:760.6999999999999px">LC07722</div>
<div class="cell" style="left:499.1px;top:760.6999999999999px">PF430DHW</div>
<div class="cell" style="left:599.4px;top:760.6999999999999px">Bond Laptops(B056)</div>
<div class="cell" style="left:741.9px;top:760.6999999999999px">Sampath ISD(227901)</div>
<div class="cell" style="left:1134.1px;top:760.6999999999999px">Inventory Room(LC-B05601)</div>
<div class="badge" style="left:1331px;top:755.9px;width:83px;background:#f2d9b4">Active</div>
<div class="cb" style="top:795.25px"></div>
<div class="cell" style="left:223.8px;top:796.25px">Computer</div>
<div class="cell code" style="left:382.8px;top:796.25px">LC06617</div>
<div class="cell" style="left:499.1px;top:796.25px">PF431CGC</div>
<div class="cell" style="left:599.4px;top:796.25px">Bond Laptops(B056)</div>
<div class="cell" style="left:741.9px;top:796.25px">Sampath ISD(227901)</div>
<div class="cell" style="left:1134.1px;top:796.25px">Inventory Room(LC-B05601)</div>
<div class="badge" style="left:1331px;top:791.45px;width:83px;background:#f2d9b4">Active</div>
<div class="abs" style="left:134.5px;top:822px;width:1301.5px;height:6px;background:#f1f1f1"></div>
<div class="abs" style="left:134.5px;top:822px;width:1110.5px;height:6px;border-radius:3px;background:#c1c1c1"></div>
</body></html>
